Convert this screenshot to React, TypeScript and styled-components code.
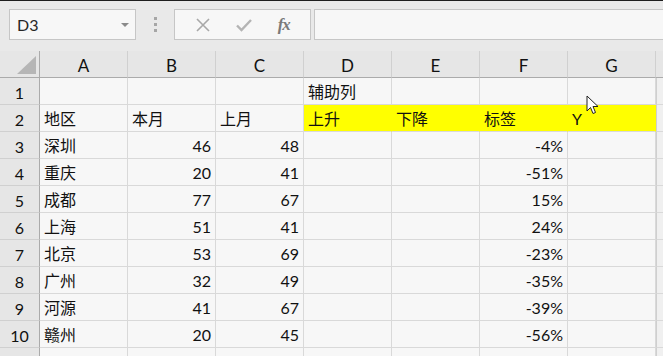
import React from "react";
import styled, { createGlobalStyle } from "styled-components";

const GlobalStyle = createGlobalStyle`
	html, body {
		margin: 0;
		padding: 0;
		background: #f0f0f0;
		overflow: hidden;
	}
	#root {
		width: 663px;
		height: 356px;
	}
`;

const Window = styled.div`
	position: relative;
	width: 663px;
	height: 356px;
	overflow: hidden;
	background: #f7f7f7;
	font-family: "Lato", "Noto Sans CJK SC", sans-serif;
	color: #111;
`;

const FormulaBar = styled.div`
	height: 51px;
	border-top: 1px solid #1e1e1e;
	background: #e9e9e9;
	display: flex;
	align-items: flex-start;
	padding: 8px 0 0 9px;
	box-sizing: border-box;
`;

const NameBox = styled.div`
	width: 127px;
	height: 31px;
	box-sizing: border-box;
	border: 1px solid #c6c6c6;
	background: #f7f7f7;
	display: flex;
	align-items: center;
	justify-content: space-between;
	padding: 0 6px 0 7px;
	font-size: 16px;
	color: #262626;
`;

const DropArrow = styled.span`
	width: 0;
	height: 0;
	border-left: 4px solid transparent;
	border-right: 4px solid transparent;
	border-top: 4px solid #8a8a8a;
`;

const Grip = styled.div`
	width: 38px;
	height: 31px;
	display: flex;
	flex-direction: column;
	align-items: center;
	justify-content: center;
	gap: 3px;
`;

const GripDot = styled.span`
	width: 3px;
	height: 3px;
	background: #a6a6a6;
`;

const ButtonBox = styled.div`
	width: 137px;
	height: 31px;
	box-sizing: border-box;
	border: 1px solid #c6c6c6;
	background: #f7f7f7;
	display: flex;
	align-items: center;
	justify-content: space-around;
	padding: 0 8px;
`;

const FxLabel = styled.span`
	font-family: "Liberation Serif", serif;
	font-style: italic;
	font-weight: bold;
	font-size: 17px;
	color: #7a7a7a;
	letter-spacing: -1px;
`;

const FormulaInput = styled.div`
	flex: 1;
	margin-left: 3px;
	height: 31px;
	box-sizing: border-box;
	border: 1px solid #c6c6c6;
	border-right: none;
	background: #f7f7f7;
`;

const Sheet = styled.div`
	display: grid;
	grid-template-columns: 40px repeat(7, 88px) 1fr;
	grid-auto-rows: 27px;
`;

const Corner = styled.div`
	background: #e6e6e6;
	border-right: 1px solid #ababab;
	border-bottom: 1px solid #ababab;
	display: flex;
	align-items: flex-end;
	justify-content: flex-end;
	padding: 0 3px 3px 0;
	box-sizing: border-box;
`;

const ColHeader = styled.div`
	background: #e6e6e6;
	border-right: 1px solid #d0d0d0;
	border-bottom: 1px solid #ababab;
	display: flex;
	align-items: center;
	justify-content: center;
	padding-top: 3px;
	box-sizing: border-box;
	font-size: 17px;
	color: #111;
`;

const RowHeader = styled.div`
	background: #e6e6e6;
	border-right: 1px solid #ababab;
	border-bottom: 1px solid #d0d0d0;
	display: flex;
	align-items: flex-end;
	justify-content: center;
	padding-bottom: 2px;
	box-sizing: border-box;
	font-size: 16px;
	color: #111;
`;

const Cell = styled.div<{ $right?: boolean; $fill?: boolean }>`
	background: ${({ $fill }) => ($fill ? "#ffff00" : "#f7f7f7")};
	border-right: 1px solid ${({ $fill }) => ($fill ? "#ffff00" : "#d9d9d9")};
	border-bottom: 1px solid #d9d9d9;
	display: flex;
	align-items: flex-end;
	justify-content: ${({ $right }) => ($right ? "flex-end" : "flex-start")};
	padding: 0 4px 1px 4px;
	box-sizing: border-box;
	font-size: 16px;
	line-height: 22px;
	white-space: nowrap;
	color: #111;
`;

const Gutter = styled.div`
	background: #f0f0f0;
	border-bottom: 1px solid #d9d9d9;
	border-left: 1px solid #cfcfcf;
`;

const HeadGutter = styled.div`
	background: #e6e6e6;
	border-bottom: 1px solid #ababab;
`;

const Pointer = styled.svg`
	position: absolute;
	left: 586px;
	top: 95px;
`;

const columns = ["A", "B", "C", "D", "E", "F", "G"];

type Value = string | number;

const rows: Value[][] = [
	["", "", "", "辅助列", "", "", ""],
	["地区", "本月", "上月", "上升", "下降", "标签", "Y"],
	["深圳", 46, 48, "", "", "-4%", ""],
	["重庆", 20, 41, "", "", "-51%", ""],
	["成都", 77, 67, "", "", "15%", ""],
	["上海", 51, 41, "", "", "24%", ""],
	["北京", 53, 69, "", "", "-23%", ""],
	["广州", 32, 49, "", "", "-35%", ""],
	["河源", 41, 67, "", "", "-39%", ""],
	["赣州", 20, 45, "", "", "-56%", ""],
];

// row 11 only peeks in at the bottom edge, its number is below the fold
const emptyRow: Value[] = ["", "", "", "", "", "", ""];

const isRightAligned = (v: Value) =>
	typeof v === "number" || /%$/.test(String(v));

export default function App() {
	return (
		<>
			<GlobalStyle />
			<Window>
				<FormulaBar>
					<NameBox>
						D3
						<DropArrow />
					</NameBox>
					<Grip>
						<GripDot />
						<GripDot />
						<GripDot />
					</Grip>
					<ButtonBox>
						<svg width="16" height="16" viewBox="0 0 16 16">
							<path
								d="M2 2 L14 14 M14 2 L2 14"
								stroke="#a8a8a8"
								strokeWidth="1.6"
								fill="none"
							/>
						</svg>
						<svg width="18" height="16" viewBox="0 0 18 16">
							<path
								d="M2 8.5 L6.5 13 L16 3"
								stroke="#b4b4b4"
								strokeWidth="2.4"
								fill="none"
							/>
						</svg>
						<FxLabel>fx</FxLabel>
					</ButtonBox>
					<FormulaInput />
				</FormulaBar>

				<Sheet>
					<Corner>
						<svg width="19" height="18" viewBox="0 0 19 18">
							<polygon points="19,0 19,18 0,18" fill="#b6b6b6" />
						</svg>
					</Corner>
					{columns.map((c) => (
						<ColHeader key={`col-${c}`}>{c}</ColHeader>
					))}
					<HeadGutter />

					{rows.map((row, r) => (
						<React.Fragment key={`row-${r}`}>
							<RowHeader>{r + 1}</RowHeader>
							{row.map((v, c) => (
								<Cell
									key={`cell-${r}-${c}`}
									$right={isRightAligned(v)}
									$fill={r === 1 && c >= 3}
								>
									{v}
								</Cell>
							))}
							<Gutter />
						</React.Fragment>
					))}

					<RowHeader />
					{emptyRow.map((v, c) => (
						<Cell key={`cell-last-${c}`}>{v}</Cell>
					))}
					<Gutter />
				</Sheet>

				<Pointer width="14" height="21" viewBox="0 0 14 21">
					<path
						d="M1 1 L1 16 L4.5 12.5 L7 18.5 L9.5 17.5 L7 11.5 L12 11.5 Z"
						fill="#fff"
						stroke="#222"
						strokeWidth="1"
						strokeLinejoin="round"
					/>
				</Pointer>
			</Window>
		</>
	);
}
